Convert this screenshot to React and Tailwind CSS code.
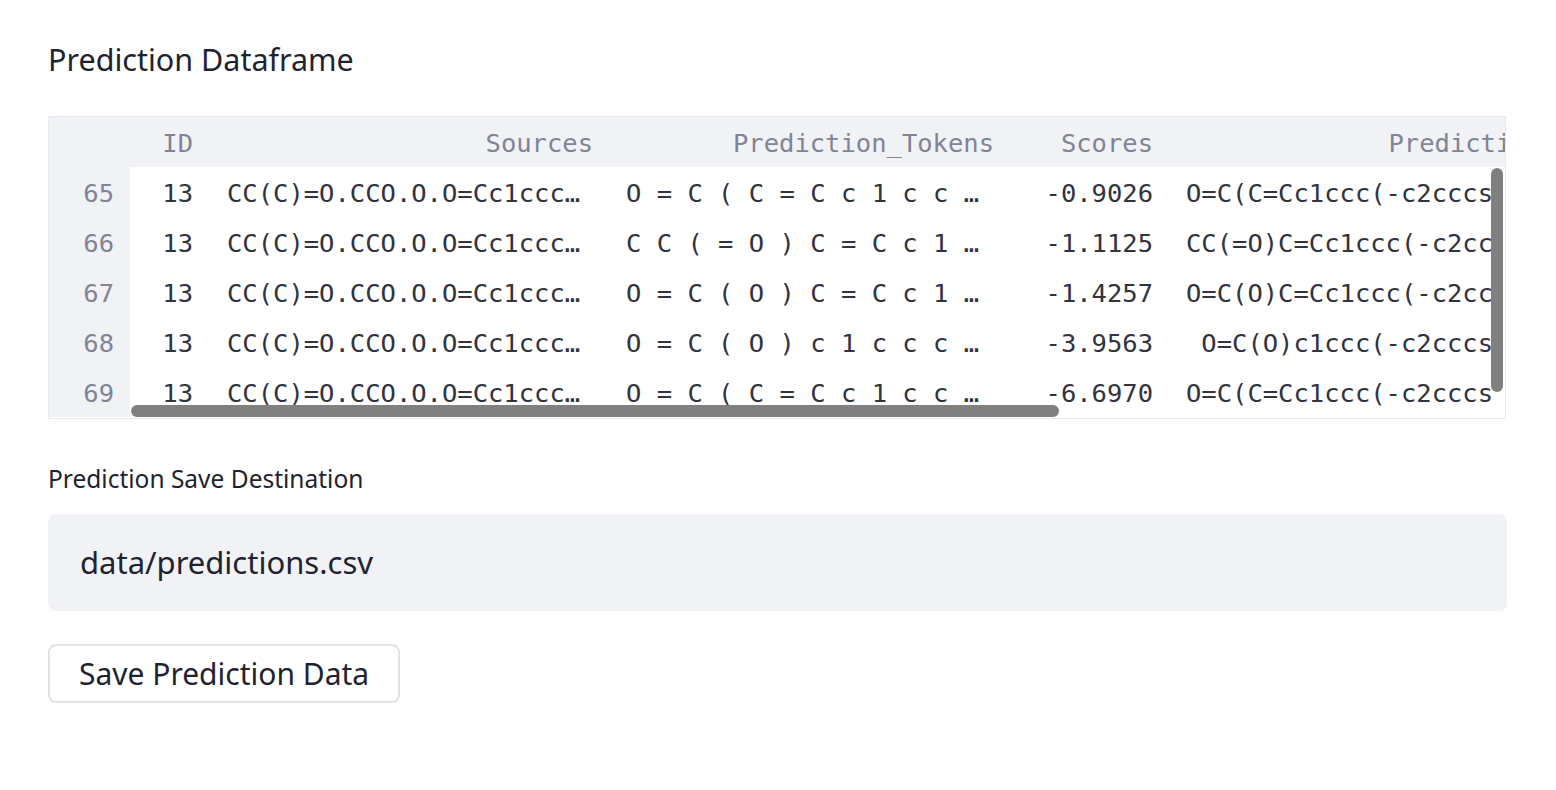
import React from 'react'

const mono = { fontFamily: '"DejaVu Sans Mono", "Liberation Mono", monospace' }

const rows = [
  { idx: 65, id: 13, src: 'CC(C)=O.CCO.O.O=Cc1ccc…', tok: 'O = C ( C = C c 1 c c …', score: '-0.9026', pred: 'O=C(C=Cc1ccc(-c2cccs' },
  { idx: 66, id: 13, src: 'CC(C)=O.CCO.O.O=Cc1ccc…', tok: 'C C ( = O ) C = C c 1 …', score: '-1.1125', pred: 'CC(=O)C=Cc1ccc(-c2cc' },
  { idx: 67, id: 13, src: 'CC(C)=O.CCO.O.O=Cc1ccc…', tok: 'O = C ( O ) C = C c 1 …', score: '-1.4257', pred: 'O=C(O)C=Cc1ccc(-c2cc' },
  { idx: 68, id: 13, src: 'CC(C)=O.CCO.O.O=Cc1ccc…', tok: 'O = C ( O ) c 1 c c c …', score: '-3.9563', pred: ' O=C(O)c1ccc(-c2cccs' },
  { idx: 69, id: 13, src: 'CC(C)=O.CCO.O.O=Cc1ccc…', tok: 'O = C ( C = C c 1 c c …', score: '-6.6970', pred: 'O=C(C=Cc1ccc(-c2cccs' },
]

// column layout shared by header and body rows
const Row = ({ cells, header }) => (
  <div className={`flex h-[50px] items-center text-[25.5px] leading-[36px] whitespace-pre ${header ? 'text-[#808495]' : 'text-[#31333f]'}`} style={mono}>
    <div className="w-[81px] h-full shrink-0 flex items-center justify-end pt-[2px] pr-[16px] bg-[#f0f2f6] text-[#808495]">{cells[0]}</div>
    <div className="w-[80px] shrink-0 pt-[2px] text-right pr-[17px]">{cells[1]}</div>
    <div className={`w-[400px] shrink-0 pt-[2px] px-[17px] ${header ? 'text-right' : 'text-left'}`}>{cells[2]}</div>
    <div className={`w-[400px] shrink-0 pt-[2px] px-[16px] ${header ? 'text-right' : 'text-left'}`}>{cells[3]}</div>
    <div className="w-[160px] shrink-0 pt-[2px] text-right pr-[17px]">{cells[4]}</div>
    <div className={`w-[388px] shrink-0 pt-[2px] px-[16px] overflow-hidden ${header ? 'text-right' : 'text-left'}`}>{cells[5]}</div>
  </div>
)

export default function App() {
  return (
    <div className="min-h-[790px] bg-white pl-[48px] pr-[50px] pt-[40px]" style={{ fontFamily: '"Noto Sans", Inter, sans-serif' }}>
      <h2 className="text-[30.5px] leading-[38px] text-[#1f2330] mb-[38px]">Prediction Dataframe</h2>

      {/* dataframe */}
      <div className="relative h-[303px] border border-[#e6e9ef] overflow-hidden">
        <div className="bg-[#f0f2f6]">
          <Row header cells={['', 'ID', 'Sources', 'Prediction_Tokens', 'Scores', 'Prediction']} />
        </div>
        {rows.map((r) => (
          <Row key={r.idx} cells={[r.idx, r.id, r.src, r.tok, r.score, r.pred]} />
        ))}
        {/* scrollbars */}
        <div className="absolute right-[2px] top-[51px] w-[12px] h-[224px] rounded-full bg-[#808080]" />
        <div className="absolute left-[82px] bottom-[1px] w-[928px] h-[12px] rounded-full bg-[#808080]" />
      </div>

      <div className="mt-[44px] text-[24.5px] leading-[32px] text-[#1f2330]">Prediction Save Destination</div>
      <div className="mt-[19px] h-[97px] w-[1459px] rounded-[8px] bg-[#f0f2f6] flex items-center px-[32px] text-[31px] text-[#1f2330]">
        data/predictions.csv
      </div>
      <button className="mt-[33px] h-[59px] px-[29px] rounded-[8px] border-2 border-[#e0e3ea] bg-white text-[30px] text-[#1f2330]">
        Save Prediction Data
      </button>
    </div>
  )
}
